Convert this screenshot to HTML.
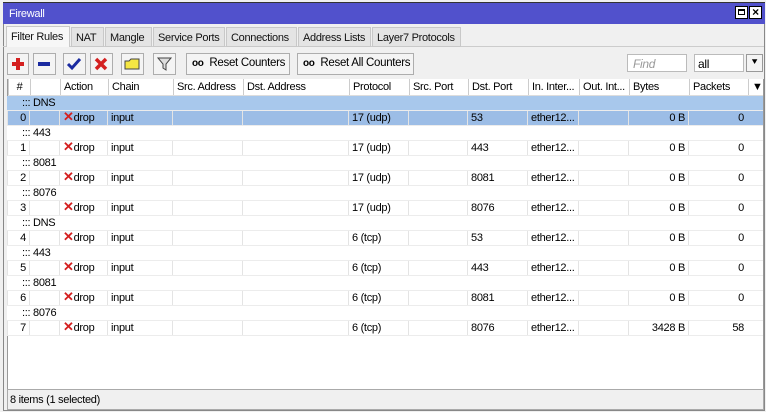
<!DOCTYPE html><html><head><style>
body{margin:0;width:766px;height:412px;background:#f0f0f0;font-family:"Liberation Sans",sans-serif;font-size:11px;color:#000;position:relative;overflow:hidden;letter-spacing:-0.3px}
.a{position:absolute;box-sizing:border-box;white-space:nowrap;overflow:hidden}
.tb{left:3px;top:2px;width:762px;height:22px;background:#5151cc;border-top:1px solid #333;color:#fff;padding:5px 0 0 6px;font-size:11px}
.tab{top:27px;height:20px;padding:4px 4px 0;border:1px solid #c8c8c8;background:#e4e4e4;color:#111}
.btn{top:53px;height:22px;border:1px solid #adadad;background:#f4f4f4}
.hdr{top:79px;height:17px;background:#fff;border-bottom:1px solid #ddd}
.c{position:absolute;top:0;height:100%;border-left:1px solid #ddd;padding:2px 3px;box-sizing:border-box;white-space:nowrap;overflow:hidden}
.row{left:7px;width:756px;height:15px}
.row .c{padding:1px 3px;border-left:1px solid #e4e4e4}
</style></head><body>
<div class="a" style="left:3px;top:2px;width:762px;height:409px;border:1px solid #888;border-top:none"></div>
<div class="a tb">Firewall</div>
<div class="a" style="left:735px;top:6px;width:13px;height:13px;background:#fff;border:1px solid #000"><div style="margin:2px;width:7px;height:6px;border:1px solid #000;border-top-width:2px;box-sizing:border-box"></div></div>
<div class="a" style="left:749px;top:6px;width:13px;height:13px;background:#fff;border:1px solid #000;font-size:12px;font-weight:bold;line-height:11px;text-align:center">×</div>
<div class="a" style="left:3px;top:46px;width:761px;height:1px;background:#ccc"></div>
<div class="a tab" style="left:6px;width:64px;background:#f7f7f7;border-bottom:none;height:21px;top:26px">Filter Rules</div>
<div class="a tab" style="left:71px;width:33px">NAT</div>
<div class="a tab" style="left:105px;width:47px">Mangle</div>
<div class="a tab" style="left:153px;width:72px">Service Ports</div>
<div class="a tab" style="left:226px;width:71px">Connections</div>
<div class="a tab" style="left:298px;width:73px">Address Lists</div>
<div class="a tab" style="left:372px;width:89px">Layer7 Protocols</div>
<div class="a btn" style="left:7px;width:22px"><svg width="20" height="20"><path d="M8 4h4v4h4v4h-4v4h-4v-4h-4v-4h4z" fill="#d42020"/></svg></div>
<div class="a btn" style="left:33px;width:23px"><svg width="21" height="20"><rect x="4" y="8" width="12" height="4" fill="#1a2aa0"/></svg></div>
<div class="a btn" style="left:63px;width:23px"><svg width="21" height="20"><path d="M4 10l4 4 8-9" stroke="#1a2aa0" stroke-width="3" fill="none"/></svg></div>
<div class="a btn" style="left:90px;width:23px"><svg width="21" height="20"><path d="M5 5l10 10M15 5l-10 10" stroke="#d42020" stroke-width="3.5"/></svg></div>
<div class="a btn" style="left:121px;width:23px"><svg width="21" height="20"><path d="M3 7h4l2-2h8v10h-14z" fill="#f5e642" stroke="#444"/></svg></div>
<div class="a btn" style="left:153px;width:23px"><svg width="21" height="20"><path d="M4 4h13l-5 6v6l-3-2v-4z" fill="#ddd" stroke="#444"/></svg></div>
<div class="a btn" style="left:186px;width:104px;padding:3px 5px;font-size:11.5px"><b style="font-size:10px">oo</b>&nbsp; Reset Counters</div>
<div class="a btn" style="left:297px;width:117px;padding:3px 5px;font-size:11.5px"><b style="font-size:10px">oo</b>&nbsp; Reset All Counters</div>
<div class="a" style="left:627px;top:54px;width:60px;height:18px;background:#fff;border:1px solid #bbb;color:#999;font-style:italic;padding:2px 5px;font-size:12px">Find</div>
<div class="a" style="left:694px;top:54px;width:50px;height:18px;background:#fff;border:1px solid #bbb;padding:2px 3px;font-size:12px">all</div>
<div class="a" style="left:746px;top:54px;width:17px;height:18px;background:#f4f4f4;border:1px solid #999;text-align:center;font-size:10px;line-height:16px">⯆</div>
<div class="a" style="left:7px;top:79px;width:757px;height:311px;background:#fff;border:1px solid #999"></div>
<div id="t"></div>
<div class="a" style="left:7px;top:389px;width:757px;height:21px;background:#f0f0f0;border:1px solid #aaa;padding:4px 2px">8 items (1 selected)</div>
<script>
var X=[8,30,60,108,173,243,349,409,468,528,579,629,689,748,763];
var H=['#','','Action','Chain','Src. Address','Dst. Address','Protocol','Src. Port','Dst. Port','In. Inter...','Out. Int...','Bytes','Packets','▼'];
function row(top,vals,bg,comment){
 var s='<div class="a row" style="top:'+top+'px;background:'+bg+';border-bottom:1px solid #ececec">';
 if(comment){s+='<div class="c" style="left:0;width:300px;border:none;padding-left:15px">::: '+comment+'</div>';}
 else for(var i=0;i<13;i++){var v=vals[i];var al=(i==0||i==11||i==12)?'text-align:right;':'';s+='<div class="c" style="left:'+(X[i]-8)+'px;width:'+(X[i+1]-X[i])+'px;'+al+'">'+v+'</div>';}
 return s+'</div>';}
var h='<div class="a hdr" style="left:8px;width:755px">';
for(var i=0;i<14;i++)h+='<div class="c" style="left:'+(X[i]-8)+'px;width:'+(X[i+1]-X[i])+'px;border-left-color:#ccc;'+(i==0?'text-align:center;':'')+'">'+H[i]+'</div>';
h+='</div>';
var cm=['DNS','443','8081','8076','DNS','443','8081','8076'];
var pr=['17 (udp)','17 (udp)','17 (udp)','17 (udp)','6 (tcp)','6 (tcp)','6 (tcp)','6 (tcp)'];
var dp=['53','443','8081','8076','53','443','8081','8076'];
var drop='<span style="color:#d42020;font-weight:bold;font-size:13px;line-height:10px">✕</span>drop';
for(var k=0;k<8;k++){var y=96+k*30;var sel=k==0;
 h+=row(y,null,sel?'#a8c8ec':'#fff',cm[k]);
 h+=row(y+15,[String(k),'',drop,'input','','',pr[k],'',dp[k],'ether12...','',k==7?'3428 B':'0 B',k==7?'58':'0'],sel?'#9cbde6':'#fff');}
document.getElementById('t').innerHTML=h;
</script>
</body></html>
